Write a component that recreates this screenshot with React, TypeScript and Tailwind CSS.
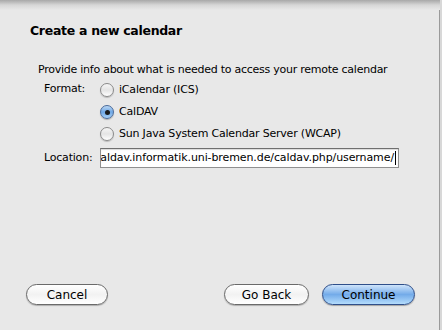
import React from 'react'

const font = { fontFamily: '"DejaVu Sans", "Liberation Sans", sans-serif' }

function Radio({ label, checked }: { label: string; checked?: boolean }) {
  return (
    <div className="flex h-[22px] items-center">
      <span
        className={
          checked
            ? 'flex h-[14px] w-[14px] items-center justify-center rounded-full border border-[#4a6a9a] bg-gradient-to-b from-[#bcd8f4] via-[#6ea6e4] to-[#a9d2f8] shadow-[0_1px_1px_rgba(0,0,0,0.25)]'
            : 'h-[14px] w-[14px] rounded-full border border-[#8a8a8a] bg-gradient-to-b from-[#f6f6f6] via-[#e4e4e4] to-[#ffffff] shadow-[0_1px_1px_rgba(0,0,0,0.2)]'
        }
      >
        {checked && <span className="h-[5px] w-[5px] rounded-full bg-[#1a1a1a]" />}
      </span>
      <span className="ml-[5px] text-[11px] tracking-[-0.2px] text-black">{label}</span>
    </div>
  )
}

function Button({ label, primary }: { label: string; primary?: boolean }) {
  return (
    <div
      className={
        primary
          ? 'flex h-[21px] items-center justify-center rounded-full border border-[#2f4f8a] bg-gradient-to-b from-[#cfe4fa] via-[#73abe9] to-[#b4dcfc] text-[12px] text-black shadow-[0_1px_1px_rgba(0,0,0,0.3)]'
          : 'flex h-[21px] items-center justify-center rounded-full border border-[#6a6a6a] bg-gradient-to-b from-[#ffffff] via-[#f2f2f2] to-[#ffffff] text-[12px] text-black shadow-[0_1px_1px_rgba(0,0,0,0.25)]'
      }
    >
      {label}
    </div>
  )
}

export default function App() {
  return (
    <div className="relative flex h-[330px] w-[442px] overflow-hidden bg-[#e8e8e8]" style={font}>
      <div className="flex w-[440px] flex-col border-r border-[#9a9a9a]">
        <h1 className="ml-[30px] mt-[22px] text-[12.5px] font-bold tracking-[-0.3px] text-black">
          Create a new calendar
        </h1>

        <p className="ml-[38px] mt-[21px] text-[11px] tracking-[-0.25px] text-black">
          Provide info about what is needed to access your remote calendar
        </p>

        <div className="mt-[1px] grid grid-cols-[56px_1fr] pl-[44px]">
          <div className="pt-[2px] text-[11px] tracking-[-0.2px] text-black">Format:</div>
          <div className="flex flex-col">
            <Radio label="iCalendar (ICS)" />
            <Radio label="CalDAV" checked />
            <Radio label="Sun Java System Calendar Server (WCAP)" />
          </div>
          <div className="mt-[3px] flex items-center text-[11px] tracking-[-0.2px] text-black">Location:</div>
          <div className="mt-[3px] flex h-[20px] w-[299px] items-center justify-end overflow-hidden border border-[#8f8f8f] border-t-[#6f6f6f] bg-white pr-[2px] shadow-[inset_0_1px_1px_rgba(0,0,0,0.15)]">
            <span className="whitespace-nowrap text-[11px] tracking-[-0.1px] text-black">
              caldav.informatik.uni-bremen.de/caldav.php/username/
            </span>
            <span className="ml-[1px] h-[14px] w-[1px] shrink-0 bg-black" />
          </div>
        </div>

        <div className="mt-auto mb-[25px] flex items-center pl-[26px] pr-[24px]">
          <div className="w-[82px]">
            <Button label="Cancel" />
          </div>
          <div className="ml-auto w-[85px]">
            <Button label="Go Back" />
          </div>
          <div className="ml-[13px] w-[93px]">
            <Button label="Continue" primary />
          </div>
        </div>
      </div>
      <div className="w-[2px] bg-[#d8d8d8]" />
      <div className="pointer-events-none absolute left-0 top-0 h-[10px] w-[440px] bg-gradient-to-b from-[#a8a8a8] via-[#d6d6d6] to-[#e8e8e8]" />
    </div>
  )
}
